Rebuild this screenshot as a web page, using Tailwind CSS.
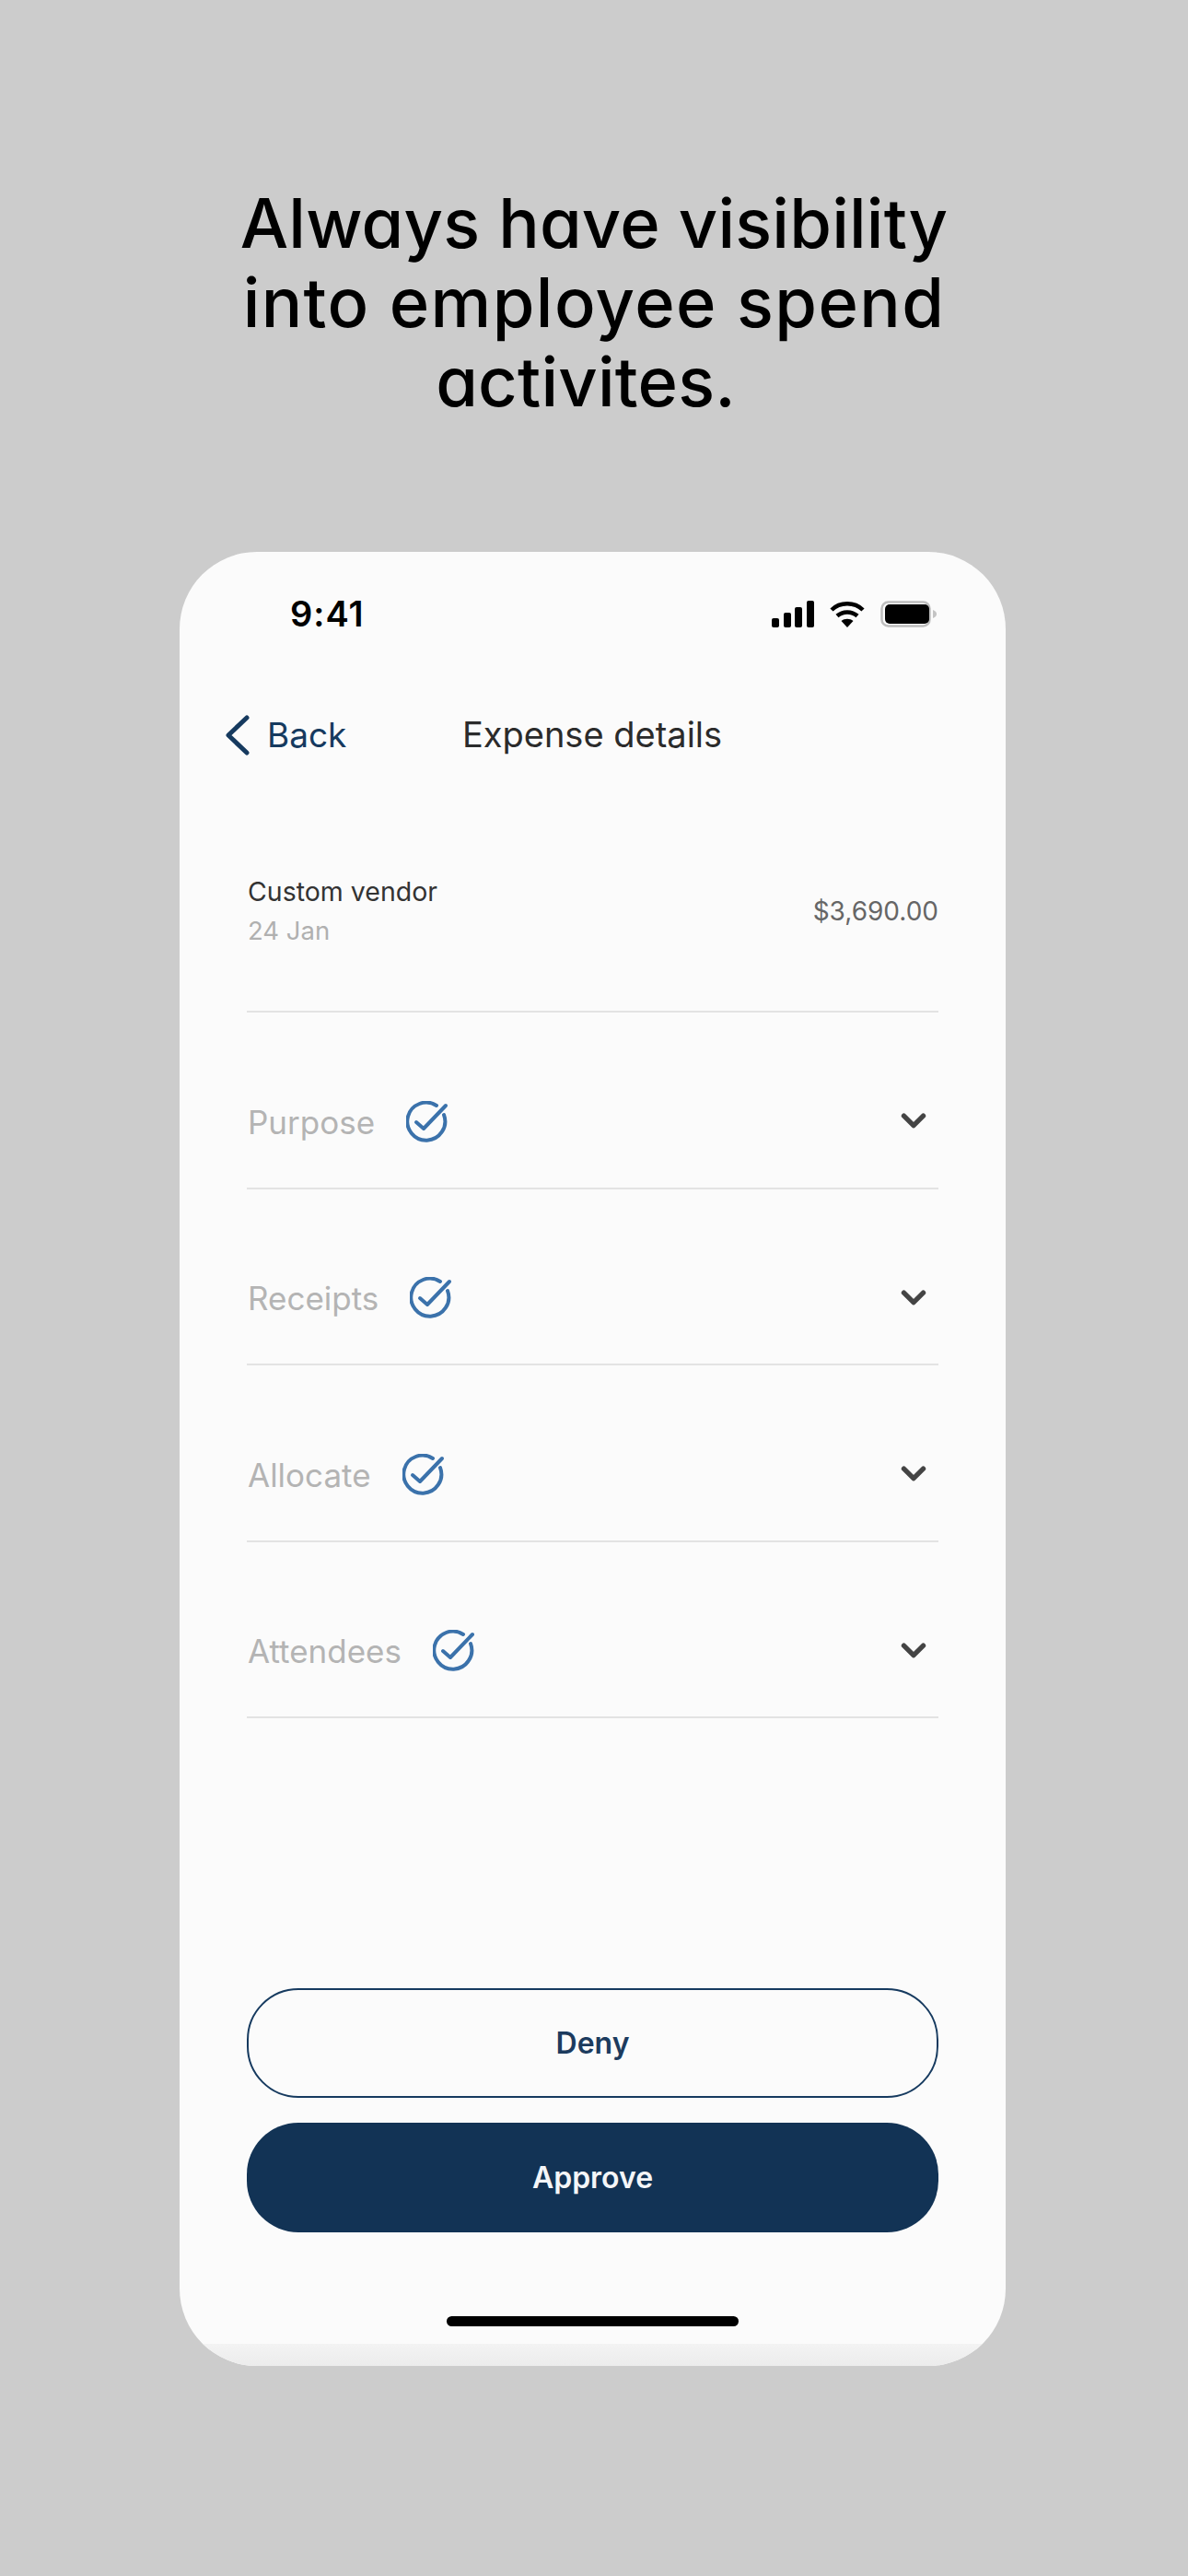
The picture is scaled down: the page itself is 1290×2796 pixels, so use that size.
<!DOCTYPE html>
<html lang="en">
<head>
    <meta charset="UTF-8">
    <title>Expense details</title>
    <script src="https://cdn.jsdelivr.net/npm/@tailwindcss/browser@4"></script>
</head>
<body class="bg-[#cccccc] font-['Inter','Liberation_Sans',sans-serif]">
    <div class="w-[1290px] h-[2796px] flex flex-col items-center overflow-hidden">
        <!-- headline -->
        <h1 class="pt-[199px] h-[599px] text-[74px] leading-[86px] font-medium text-black text-center tracking-[0.2px] [font-feature-settings:'cv11']">
            Always have visibility<br><span class="tracking-[1.4px]">into employee spend</span><br><span class="inline-block -translate-x-[9px]">activites.</span>
        </h1>

        <!-- phone -->
        <div class="relative w-[897px] h-[1969px] -ml-[3px] bg-[#fbfbfb] rounded-[84px] overflow-hidden flex flex-col">
            <div class="flex items-center justify-between pt-[46px] pl-[120px] pr-[74px] h-[88px]">
                <span class="text-[38px] leading-[46px] font-semibold tracking-[1px] text-black">9:41</span>
                <div class="flex items-center gap-[17px]">
                    <svg class="w-[46px] h-[29px]" viewBox="0 0 46 29" fill="#000">
                        <rect x="0" y="19" width="8" height="10" rx="2"/>
                        <rect x="13" y="13" width="8" height="16" rx="2"/>
                        <rect x="25" y="7" width="8" height="22" rx="2"/>
                        <rect x="38" y="0" width="8" height="29" rx="2"/>
                    </svg>
                    <svg class="w-[38px] h-[29px]" viewBox="0 0 38 29" fill="none" stroke="#000" stroke-width="4.5">
                        <path d="M2 10 C11 1 27 1 36 10"/>
                        <path d="M8 16.5 C14 11 24 11 30 16.5"/>
                        <path d="M19 29 L12.5 22 C16 19 22 19 25.5 22 Z" fill="#000" stroke="none"/>
                    </svg>
                    <svg class="w-[62px] h-[29px]" viewBox="0 0 62 29">
                        <rect x="1.5" y="1.5" width="52" height="26" rx="7" fill="none" stroke="#bdbdbd" stroke-width="2.5"/>
                        <rect x="5" y="4" width="48" height="21" rx="5" fill="#000"/>
                        <path d="M57 10 C60 11 61 13 61 14.5 C61 16 60 18 57 19 Z" fill="#c4c4c4"/>
                    </svg>
                </div>
            </div>

            <div class="grid grid-cols-[1fr_auto_1fr] items-center mt-[82px] pl-[49px] h-[56px]">
                <div class="flex items-center gap-[18px]">
                    <svg class="w-[28px] h-[44px]" viewBox="0 0 28 44" fill="none" stroke="#163a5f" stroke-width="5" stroke-linecap="round" stroke-linejoin="round">
                        <path d="M24 3 L4 22 L24 41"/>
                    </svg>
                    <span class="text-[37px] text-[#163a5f]">Back</span>
                </div>
                <span class="text-[38px] text-[#2b2b2b] -translate-x-[25px]">Expense details</span>
                <span></span>
            </div>

            <div class="mx-[73px] h-[274px] pt-[122px] pl-[1px] border-b-2 border-[#e3e3e3] flex justify-between items-start">
                <div>
                    <div class="text-[28.5px] leading-[42px] text-[#333333]">Custom vendor</div>
                    <div class="text-[27.5px] leading-[42px] text-[#b0b0b0]">24 Jan</div>
                </div>
                <div class="text-[28px] leading-[42px] pt-[21px] text-[#666666]">$3,690.00</div>
            </div>

            <div class="mx-[73px]">
                <div class="h-[191.5px] pt-[48px] pl-[1px] pr-[12px] border-b-2 border-[#e3e3e3] flex items-center gap-[34px] text-[35px] text-[#b4b4b4]">
                    <span>Purpose</span>
                    <svg class="w-[46px] h-[46px]" viewBox="0 0 46 46" fill="none" stroke="#3b72ab" stroke-width="4" stroke-linecap="round" stroke-linejoin="round">
                        <path d="M41 15 A20.5 20.5 0 1 1 33 5"/>
                        <path d="M11 23 L19 30 L43 5"/>
                    </svg>
                    <svg class="ml-auto w-[30px] h-[19px]" viewBox="0 0 28 18" fill="none" stroke="#444444" stroke-width="5" stroke-linecap="round" stroke-linejoin="round">
                        <path d="M4 3 L14 13 L24 3"/>
                    </svg>
                </div>
                <div class="h-[191.5px] pt-[48px] pl-[1px] pr-[12px] border-b-2 border-[#e3e3e3] flex items-center gap-[34px] text-[35px] text-[#b4b4b4]">
                    <span>Receipts</span>
                    <svg class="w-[46px] h-[46px]" viewBox="0 0 46 46" fill="none" stroke="#3b72ab" stroke-width="4" stroke-linecap="round" stroke-linejoin="round">
                        <path d="M41 15 A20.5 20.5 0 1 1 33 5"/>
                        <path d="M11 23 L19 30 L43 5"/>
                    </svg>
                    <svg class="ml-auto w-[30px] h-[19px]" viewBox="0 0 28 18" fill="none" stroke="#444444" stroke-width="5" stroke-linecap="round" stroke-linejoin="round">
                        <path d="M4 3 L14 13 L24 3"/>
                    </svg>
                </div>
                <div class="h-[191.5px] pt-[48px] pl-[1px] pr-[12px] border-b-2 border-[#e3e3e3] flex items-center gap-[34px] text-[35px] text-[#b4b4b4]">
                    <span>Allocate</span>
                    <svg class="w-[46px] h-[46px]" viewBox="0 0 46 46" fill="none" stroke="#3b72ab" stroke-width="4" stroke-linecap="round" stroke-linejoin="round">
                        <path d="M41 15 A20.5 20.5 0 1 1 33 5"/>
                        <path d="M11 23 L19 30 L43 5"/>
                    </svg>
                    <svg class="ml-auto w-[30px] h-[19px]" viewBox="0 0 28 18" fill="none" stroke="#444444" stroke-width="5" stroke-linecap="round" stroke-linejoin="round">
                        <path d="M4 3 L14 13 L24 3"/>
                    </svg>
                </div>
                <div class="h-[191.5px] pt-[48px] pl-[1px] pr-[12px] border-b-2 border-[#e3e3e3] flex items-center gap-[34px] text-[35px] text-[#b4b4b4]">
                    <span>Attendees</span>
                    <svg class="w-[46px] h-[46px]" viewBox="0 0 46 46" fill="none" stroke="#3b72ab" stroke-width="4" stroke-linecap="round" stroke-linejoin="round">
                        <path d="M41 15 A20.5 20.5 0 1 1 33 5"/>
                        <path d="M11 23 L19 30 L43 5"/>
                    </svg>
                    <svg class="ml-auto w-[30px] h-[19px]" viewBox="0 0 28 18" fill="none" stroke="#444444" stroke-width="5" stroke-linecap="round" stroke-linejoin="round">
                        <path d="M4 3 L14 13 L24 3"/>
                    </svg>
                </div>
            </div>

            <div class="mt-auto mx-[73px] flex flex-col gap-[27px]">
                <button class="h-[119px] rounded-[56px] border-2 border-[#163a5f] text-[32px] font-semibold text-[#1c3b5e]">Deny</button>
                <button class="h-[119px] rounded-[56px] bg-[#123355] text-[32px] font-semibold text-[#f4f6f8]">Approve</button>
            </div>

            <div class="mt-[91px] mb-[43px] mx-auto w-[317px] h-[11px] rounded-full bg-black"></div>

            <div class="absolute bottom-0 inset-x-0 h-[24px] bg-gradient-to-b from-[#f3f3f3] to-[#ececec]"></div>
        </div>
    </div>
</body>
</html>
